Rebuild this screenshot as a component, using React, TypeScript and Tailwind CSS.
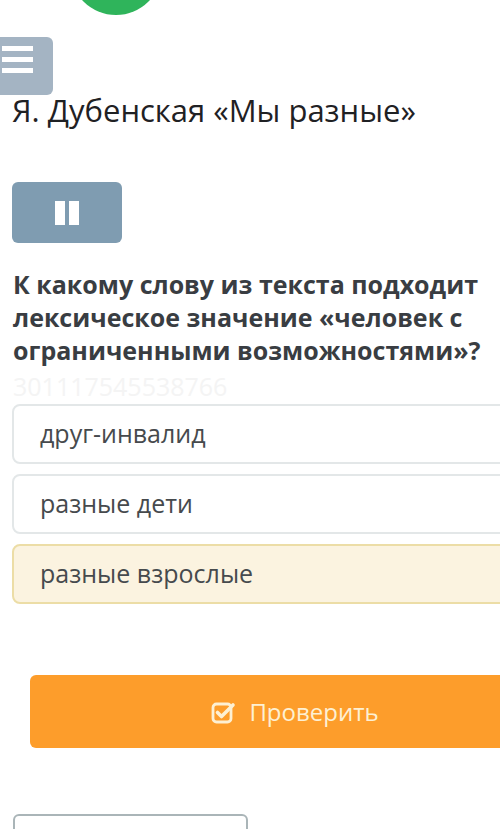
import React, { FC } from 'react'

const options = [
  { text: 'друг-инвалид', selected: false },
  { text: 'разные дети', selected: false },
  { text: 'разные взрослые', selected: true },
]

const CheckSquare: FC = () => (
  <svg width="26" height="24" viewBox="0 0 26 24" fill="none" className="mr-[12px]">
    <rect x="2" y="4" width="18" height="18" rx="3.5" stroke="currentColor" strokeWidth="2.8" />
    <path d="M6.5 12.5 l4 4 L22 5" stroke="currentColor" strokeWidth="3.6" strokeLinecap="round" strokeLinejoin="round" />
  </svg>
)

const App: FC = () => {
  return (
    <div className="w-[500px] h-[829px] overflow-hidden bg-white font-['Open_Sans',sans-serif]">
      <div className="h-[15px] overflow-hidden">
        <div className="ml-[70px] -mt-[77px] w-[92px] h-[92px] rounded-full bg-[#2fb45b]" />
      </div>

      <div className="mt-[22px] w-[53px] h-[58px] bg-[#a4b4c3] rounded-r-md flex flex-col gap-[6px] pt-[9px] pl-[2px]">
        <div className="w-[31px] h-[5px] bg-white" />
        <div className="w-[31px] h-[5px] bg-white" />
        <div className="w-[31px] h-[5px] bg-white" />
      </div>

      <h1 className="ml-[12px] text-[31px] leading-[30px] text-[#1f2124] whitespace-nowrap">
        Я. Дубенская «Мы разные»
      </h1>

      <div className="mt-[57px] ml-[12px] w-[110px] h-[61px] rounded-md bg-[#7f9cb1] flex items-center justify-center gap-[4px]">
        <div className="w-[10px] h-[24px] bg-white" />
        <div className="w-[10px] h-[24px] bg-white" />
      </div>

      <p className="mt-[25px] ml-[13px] w-[487px] text-[25px] leading-[33px] font-bold text-[#393d42]">
        К какому слову из текста подходит лексическое значение «человек с ограниченными возможностями»?
      </p>
      <div className="mt-[3px] ml-[13px] text-[25px] leading-[33px] text-[#f4f4f4]">301117545538766</div>

      <div className="mt-[1px] ml-[12px] w-[560px] flex flex-col gap-[10px]">
        {options.map((o) => (
          <div
            key={o.text}
            className={
              o.selected
                ? 'h-[60px] rounded-lg border-2 border-[#ecdda6] bg-[#fbf3e0] flex items-center pl-[26px] text-[25px] text-[#464a4d]'
                : 'h-[60px] rounded-lg border-2 border-[#e3e7e8] bg-white flex items-center pl-[26px] text-[25px] text-[#464a4d]'
            }
          >
            {o.text}
          </div>
        ))}
      </div>

      <div className="mt-[71px] ml-[30px] w-[530px] h-[73px] rounded-md bg-[#fd9d2b] flex items-center justify-center text-[24px] text-[#fdf0d3]">
        <CheckSquare />
        Проверить
      </div>

      <div className="mt-[66px] ml-[13px] w-[235px] h-[40px] rounded-md border-2 border-[#aab5b8] bg-white" />
    </div>
  )
}

export default App
